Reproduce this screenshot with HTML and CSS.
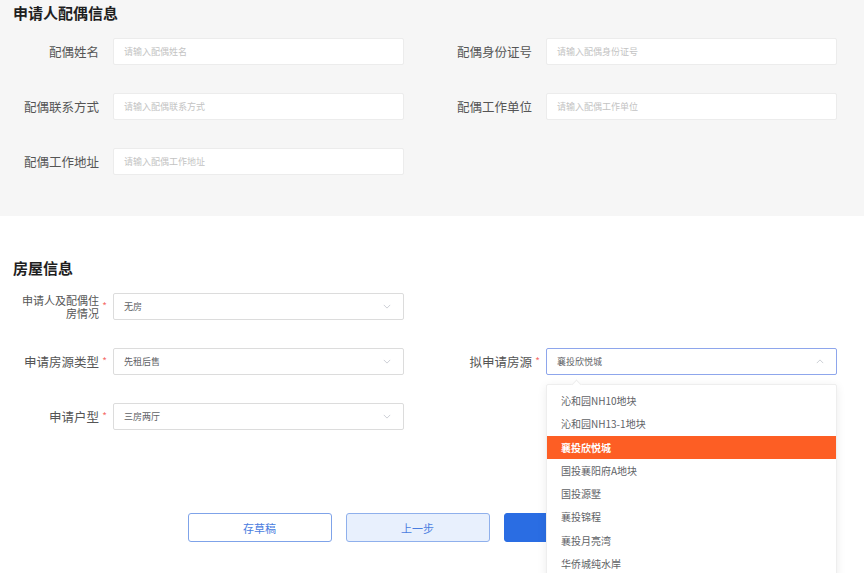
FILE: index.html
```html
<!DOCTYPE html>
<html lang="zh-CN">
<head>
<meta charset="utf-8">
<title>申请表</title>
<link rel="stylesheet" href="styles.css">
</head>
<body>
<section class="sec sec-gray">
  <h2 class="sec-title">申请人配偶信息</h2>
  <div class="form-grid">
    <div class="field"><label class="lbl">配偶姓名</label><div class="input"><span class="ph">请输入配偶姓名</span></div></div>
    <div class="field"><label class="lbl">配偶身份证号</label><div class="input"><span class="ph">请输入配偶身份证号</span></div></div>
    <div class="field"><label class="lbl">配偶联系方式</label><div class="input"><span class="ph">请输入配偶联系方式</span></div></div>
    <div class="field"><label class="lbl">配偶工作单位</label><div class="input"><span class="ph">请输入配偶工作单位</span></div></div>
    <div class="field"><label class="lbl">配偶工作地址</label><div class="input"><span class="ph">请输入配偶工作地址</span></div></div>
  </div>
</section>

<section class="sec sec-white">
  <h2 class="sec-title">房屋信息</h2>
  <div class="form-grid">
    <div class="field"><label class="lbl lbl-small req">申请人及配偶住<br>房情况</label>
      <div class="input select"><span class="val">无房</span><svg class="chev" viewBox="0 0 10 6"><path d="M1 1l4 4 4-4" fill="none" stroke="#c0c4cc" stroke-width="1"/></svg></div></div>
    <div class="field empty"></div>
    <div class="field"><label class="lbl req">申请房源类型</label>
      <div class="input select"><span class="val">先租后售</span><svg class="chev" viewBox="0 0 10 6"><path d="M1 1l4 4 4-4" fill="none" stroke="#c0c4cc" stroke-width="1"/></svg></div></div>
    <div class="field dd-host"><label class="lbl req">拟申请房源</label>
      <div class="input select active"><span class="val">襄投欣悦城</span><svg class="chev" viewBox="0 0 10 6"><path d="M1 5l4-4 4 4" fill="none" stroke="#c0c4cc" stroke-width="1"/></svg></div>
      <ul class="dropdown">
        <li>沁和园NH10地块</li>
        <li>沁和园NH13-1地块</li>
        <li class="on">襄投欣悦城</li>
        <li>国投襄阳府A地块</li>
        <li>国投源墅</li>
        <li>襄投锦程</li>
        <li>襄投月亮湾</li>
        <li>华侨城纯水岸</li>
      </ul>
    </div>
    <div class="field"><label class="lbl req">申请户型</label>
      <div class="input select"><span class="val">三房两厅</span><svg class="chev" viewBox="0 0 10 6"><path d="M1 1l4 4 4-4" fill="none" stroke="#c0c4cc" stroke-width="1"/></svg></div></div>
  </div>
  <div class="actions">
    <button class="btn btn-outline">存草稿</button>
    <button class="btn btn-light">上一步</button>
    <button class="btn btn-primary">下一步</button>
  </div>
</section>
</body>
</html>
```

FILE: styles.css
```css
* { box-sizing: border-box; }
html, body { margin: 0; padding: 0; }
body {
  width: 864px;
  height: 573px;
  overflow: hidden;
  font-family: "Noto Sans CJK SC", "Noto Sans", sans-serif;
  color: #555;
  background: #fff;
}
.sec { padding-right: 27px; }
.sec-gray {
  background: #f6f6f6;
  padding-top: 4px;
  height: 216px;
}
.sec-white {
  padding-top: 43px;
}
.sec-title {
  margin: 0 0 0 13px;
  font-size: 15px;
  line-height: 18px;
  font-weight: 700;
  color: #1f1f1f;
}
.form-grid {
  display: grid;
  grid-template-columns: 404px 404px;
  column-gap: 29px;
  row-gap: 28px;
  margin-top: 16px;
}
.sec-white .form-grid { margin-top: 16px; }
.field {
  display: flex;
  align-items: center;
  height: 27px;
}
.dd-host { position: relative; }
.lbl {
  width: 113px;
  flex: none;
  text-align: right;
  padding-right: 14px;
  font-size: 12.5px;
  line-height: 15px;
  color: #555;
  position: relative;
}
.lbl-small {
  font-size: 11px;
  line-height: 13px;
}
.req::after {
  content: "*";
  position: absolute;
  right: 6px;
  top: 50%;
  margin-top: -7px;
  color: #f56c6c;
  font-size: 10px;
  line-height: 12px;
}
.input {
  flex: 1;
  height: 27px;
  background: #fff;
  border: 1px solid #ececec;
  border-radius: 2px;
  display: flex;
  align-items: center;
  padding: 0 10px;
  font-size: 9px;
}
.ph { color: #c3c3c3; }
.select { border-color: #dcdcdc; }
.val { color: #606266; flex: 1; }
.chev { width: 8px; height: 5px; margin-right: 2px; }
.active { border-color: #8ea6ec; }
.dropdown {
  position: absolute;
  left: 113px;
  right: 0;
  top: 36px;
  margin: 0;
  padding: 4px 0;
  list-style: none;
  background: #fff;
  border: 1px solid #eee;
  box-shadow: 0 2px 10px rgba(0,0,0,0.08);
  border-radius: 2px;
  z-index: 5;
}
.dropdown::before {
  content: "";
  position: absolute;
  left: 26px;
  top: -4px;
  width: 6px;
  height: 6px;
  background: #fff;
  border-left: 1px solid #eee;
  border-top: 1px solid #eee;
  transform: rotate(45deg);
}
.dropdown li {
  height: 23.3px;
  line-height: 23.3px;
  padding-left: 14px;
  font-size: 10px;
  color: #606266;
}
.dropdown li.on {
  background: #fd5e24;
  color: #fff;
  font-weight: 700;
}
.actions {
  display: flex;
  justify-content: center;
  gap: 14px;
  margin-top: 83px;
  padding-right: 2px;
}
.btn {
  width: 144px;
  height: 29px;
  border-radius: 3px;
  font-family: inherit;
  font-size: 11px;
  border: 1px solid #7fa3e9;
  cursor: pointer;
}
.btn-outline { background: #fff; color: #4a7de0; }
.btn-light { background: #e8f0fd; color: #4a7de0; border-color: #8fb0ec; }
.btn-primary { background: #2a6de3; color: #fff; border-color: #2a6de3; }
```
